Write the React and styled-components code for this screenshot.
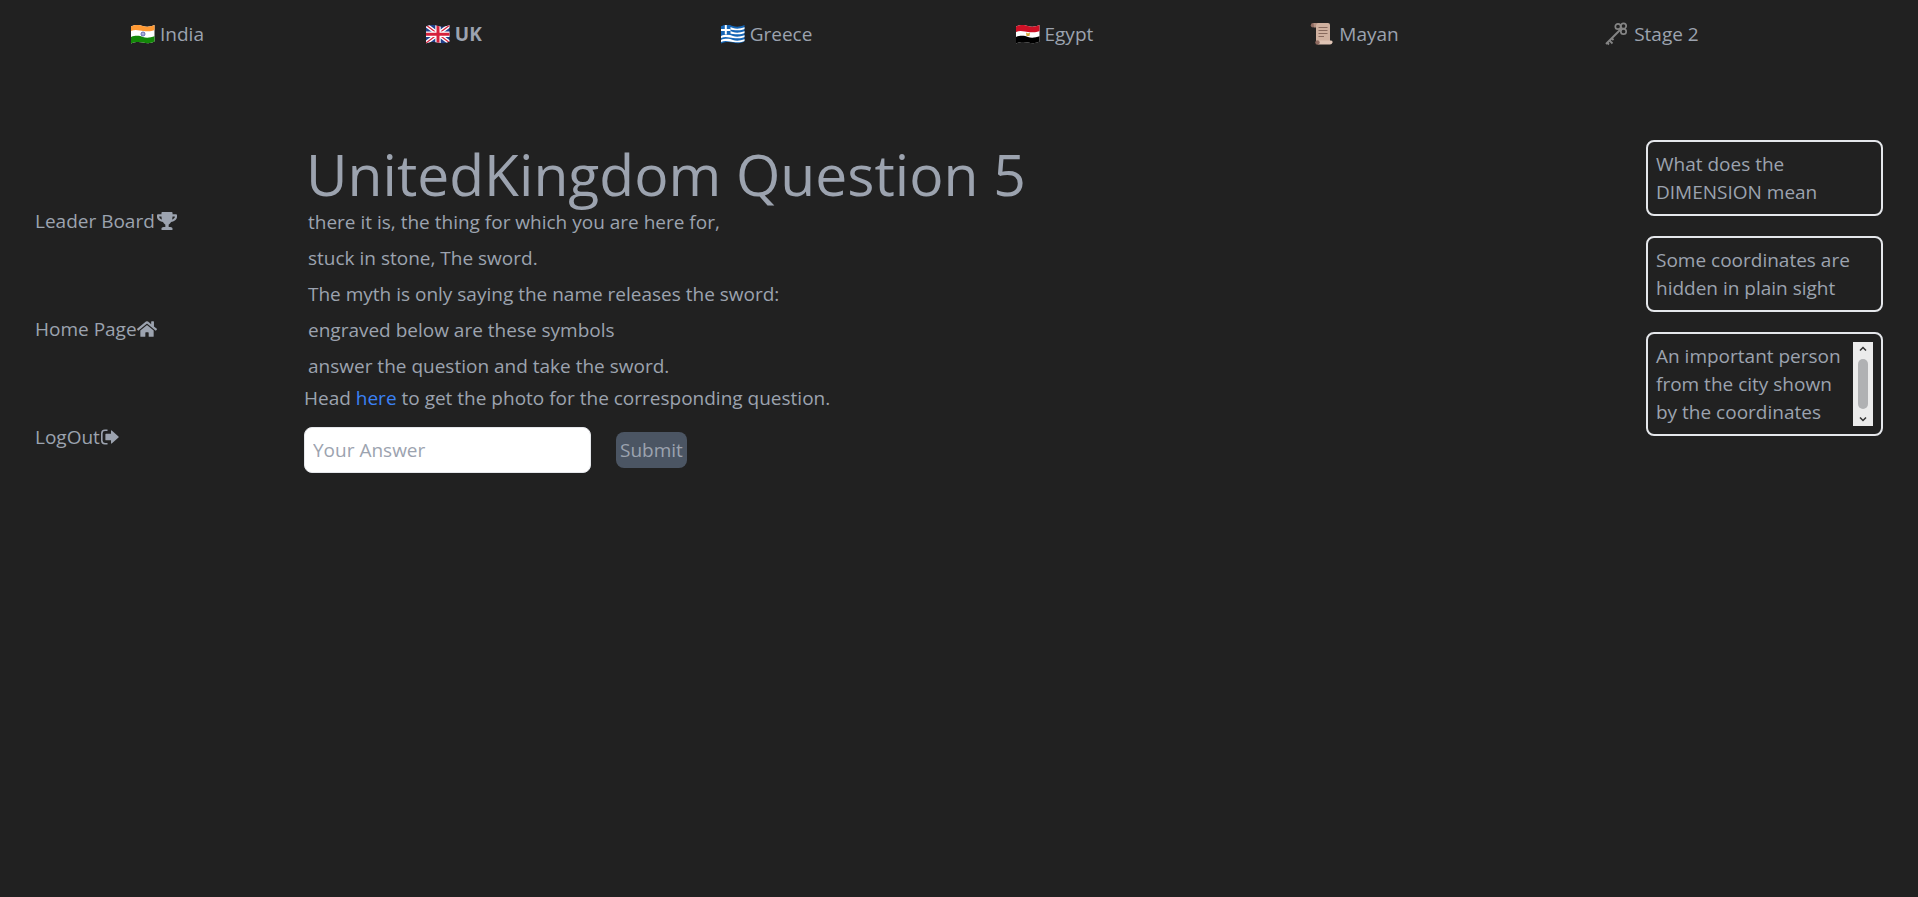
import React from "react";
import styled, { createGlobalStyle } from "styled-components";
import { FaTrophy, FaHome } from "react-icons/fa";

const Global = createGlobalStyle`
  *, *::before, *::after { box-sizing: border-box; }
  body {
    margin: 0;
    background: #212121;
    color: #9ca3af;
    font-family: "Open Sans", "Noto Sans", sans-serif;
    font-size: 19px;
    line-height: 28px;
  }
  h1, p, ul { margin: 0; padding: 0; }
  ul { list-style: none; }
  a { color: inherit; text-decoration: none; }
`;

const Stages = styled.nav`
  display: grid;
  grid-template-columns: repeat(6, 1fr);
  padding: 20px 18px 20px 131px;
`;
const StageLink = styled.a`
  display: flex;
  align-items: center;
  gap: 5px;
  font-weight: ${(p) => (p.$current ? 700 : 400)};
`;
const Emoji = styled.svg`
  width: 24px;
  height: 24px;
  flex: none;
`;
const Body = styled.div`
  display: flex;
  align-items: flex-start;
  padding: 72px 35px 0;
`;
const Side = styled.ul`
  display: flex;
  flex-direction: column;
  gap: 80px;
  width: 269px;
  flex: none;
  padding-top: 67px;
`;
const SideLink = styled.a`
  display: inline-flex;
  align-items: center;
  gap: ${(p) => (p.$spaced ? 2 : 0)}px;
  white-space: nowrap;
  svg { width: 20px; height: 20px; }
`;
const Main = styled.main`
  flex: 1;
  min-width: 0;
  padding-top: 4px;
`;
const Title = styled.h1`
  padding-left: 2px;
  font-size: 57px;
  line-height: 60px;
  font-weight: 400;
`;
const Line = styled.p`
  padding: 4px;
`;
const PhotoLink = styled.a`
  && { color: #3b82f6; }
`;
const Form = styled.form`
  display: flex;
  align-items: center;
  gap: 25px;
  margin-top: 15px;
`;
const Answer = styled.input`
  width: 287px;
  height: 46px;
  padding: 8px;
  border: 1px solid #e5e7eb;
  border-radius: 8px;
  background: #fff;
  color: #212121;
  font: inherit;
  &::placeholder { color: #9ca3af; opacity: 1; }
`;
const Submit = styled.button`
  height: 36px;
  padding: 4px;
  border: 0;
  border-radius: 8px;
  background: #4b5563;
  color: #9ca3af;
  font: inherit;
`;
const Hints = styled.aside`
  display: flex;
  flex-direction: column;
  gap: 20px;
  width: 237px;
  flex: none;
`;
const Hint = styled.div`
  display: flex;
  justify-content: space-between;
  padding: 8px;
  border: 2px solid #e5e7eb;
  border-radius: 8px;
`;
const Track = styled.div`
  display: flex;
  flex-direction: column;
  align-items: center;
  justify-content: space-between;
  width: 20px;
  flex: none;
  padding: 4px 0;
  background: #ebebeb;
  svg { width: 8px; height: 5px; }
`;
const Thumb = styled.div`
  width: 10px;
  height: 50px;
  border-radius: 5px;
  background: #b0b1b3;
`;

const WAVE = "M0 4.500 C5 2 9 3 12 4 S19 5 23.500 3 V19.500 C19 22 15 21 12 20.500 S5 19.500 0 21.500Z";

function Flag({ id, label, children }) {
  return (
    <Emoji viewBox="0 0 24 24" role="img" aria-label={label}>
      <clipPath id={id}><path d={WAVE} /></clipPath>
      <g clipPath={`url(#${id})`}>{children}</g>
    </Emoji>
  );
}

const band = (y, fill, h = 6) => (
  <path
    key={y}
    d={`M0 ${y} C5 ${y - 2} 9 ${y - 1} 12 ${y} S19 ${y + 1} 24 ${y - 1} V${y + h - 1} C19 ${y + h + 1} 15 ${y + h} 12 ${y + h} S5 ${y + h - 2} 0 ${y + h}Z`}
    fill={fill}
  />
);

const India = () => (
  <Flag id="india" label="India flag">
    <rect width="24" height="24" fill="#fff" />
    {band(2, "#ff9933", 7)}
    {band(15, "#138808", 9)}
    <circle cx="12" cy="12" r="2" fill="#c9cbe8" stroke="#3f46a0" strokeWidth=".8" />
    <circle cx="12" cy="12" r=".6" fill="#3f46a0" />
  </Flag>
);
const Britain = () => (
  <Flag id="britain" label="UK flag">
    <rect width="24" height="24" fill="#22408c" />
    <path d="M0 3 24 21M24 3 0 21" stroke="#fff" strokeWidth="4" />
    <path d="M0 3 24 21M24 3 0 21" stroke="#d6213c" strokeWidth="1.300" />
    <path d="M12 0V24M0 12.200H24" stroke="#fff" strokeWidth="5.400" />
    <path d="M12 0V24M0 12.200H24" stroke="#d6213c" strokeWidth="3" />
  </Flag>
);
const Greece = () => (
  <Flag id="greece" label="Greece flag">
    <rect width="24" height="24" fill="#1565b5" />
    {[6, 10, 14, 18].map((y) => band(y, "#fff", 2))}
    <rect width="9.500" height="12.500" fill="#1565b5" />
    <path d="M4.800 2V12.500M0 8H9.500" stroke="#fff" strokeWidth="2" />
  </Flag>
);
const Egypt = () => (
  <Flag id="egypt" label="Egypt flag">
    <rect width="24" height="24" fill="#fff" />
    {band(2, "#ce1126", 8)}
    {band(15, "#000", 9)}
    <path d="M10 10.500 12 11.500 14 10.500 13.500 14H10.500Z" fill="#d2aa3c" />
  </Flag>
);
const Scroll = () => (
  <Emoji viewBox="0 0 24 24" role="img" aria-label="Scroll">
    <path d="M3.500 1H18Q20 1 20 3V20H6V5H3.500Z" fill="#cfb09f" />
    <circle cx="3" cy="3.200" r="2.200" fill="#8f6b61" />
    <path d="M3.500 1H8Q5.500 2 6 5.500H4Z" fill="#b39182" />
    <path d="M7 18.500H21Q23 18.500 22.500 20.500T20 22.500H8Z" fill="#dfc4b5" />
    <circle cx="7.500" cy="20.500" r="2.200" fill="#8f6b61" />
    <path d="M8.500 5.500H17.500M8.500 8.500H17.500M8.500 11.500H17.500M8.500 14.500H14" stroke="#87695d" strokeWidth="1" />
  </Emoji>
);
const Key = () => (
  <Emoji viewBox="0 0 24 24" role="img" aria-label="Key" fill="none" stroke="#858585">
    <circle cx="13" cy="4.500" r="2.700" strokeWidth="1.700" />
    <circle cx="18.500" cy="4" r="2.700" strokeWidth="1.700" />
    <circle cx="18.500" cy="9.500" r="2.700" strokeWidth="1.700" />
    <path d="M16 7 1 22" strokeWidth="2" />
    <path d="M4.500 18.500 7.500 21.500M2 20.500 4 22.500M7 16.500 8.500 18" strokeWidth="1.800" />
  </Emoji>
);
const SignOut = () => (
  <svg viewBox="0 0 20 20" aria-hidden="true">
    <path d="M7.500 3.200H5Q1.800 3.200 1.800 6.400V13.600Q1.800 16.800 5 16.800H7.500" fill="none" stroke="currentColor" strokeWidth="1.600" />
    <path d="M6 6.700H11V4Q11 2.800 12 3.700L18.500 9.500Q19 10 18.500 10.500L12 16.300Q11 17.200 11 16V13.300H6Q5.400 13.300 5.400 12.700V7.300Q5.400 6.700 6 6.700Z" fill="currentColor" />
  </svg>
);

const stages = [
  ["India", India],
  ["UK", Britain],
  ["Greece", Greece],
  ["Egypt", Egypt],
  ["Mayan", Scroll],
  ["Stage 2", Key],
];
const verse = [
  "there it is, the thing for which you are here for,",
  "stuck in stone, The sword.",
  "The myth is only saying the name releases the sword:",
  "engraved below are these symbols",
  "answer the question and take the sword.",
];

export default function App() {
  return (
    <>
      <Global />
      <Stages aria-label="Stages">
        {stages.map(([name, Icon]) => (
          <StageLink key={name} href="#" $current={name === "UK"}>
            <Icon />
            {name}
          </StageLink>
        ))}
      </Stages>
      <Body>
        <Side>
          <li><SideLink href="#" $spaced>Leader Board <FaTrophy /></SideLink></li>
          <li><SideLink href="#">Home Page<FaHome /></SideLink></li>
          <li><SideLink href="#">LogOut<SignOut /></SideLink></li>
        </Side>
        <Main>
          <Title>UnitedKingdom Question 5</Title>
          {verse.map((line) => <Line key={line}>{line}</Line>)}
          <p>
            Head <PhotoLink href="#">here</PhotoLink> to get the photo for the corresponding question.
          </p>
          <Form onSubmit={(e) => e.preventDefault()}>
            <Answer type="text" placeholder="Your Answer" aria-label="Your Answer" />
            <Submit type="submit">Submit</Submit>
          </Form>
        </Main>
        <Hints>
          <Hint>What does the DIMENSION mean</Hint>
          <Hint>Some coordinates are hidden in plain sight</Hint>
          <Hint>
            <span>An important person from the city shown by the coordinates</span>
            <Track>
              <svg viewBox="0 0 8 5" fill="none" stroke="#333" strokeWidth="1.500"><path d="M1 4.500 4 1.500 7 4.500" /></svg>
              <Thumb />
              <svg viewBox="0 0 8 5" fill="none" stroke="#333" strokeWidth="1.500"><path d="M1 .5 4 3.500 7 .5" /></svg>
            </Track>
          </Hint>
        </Hints>
      </Body>
    </>
  );
}
